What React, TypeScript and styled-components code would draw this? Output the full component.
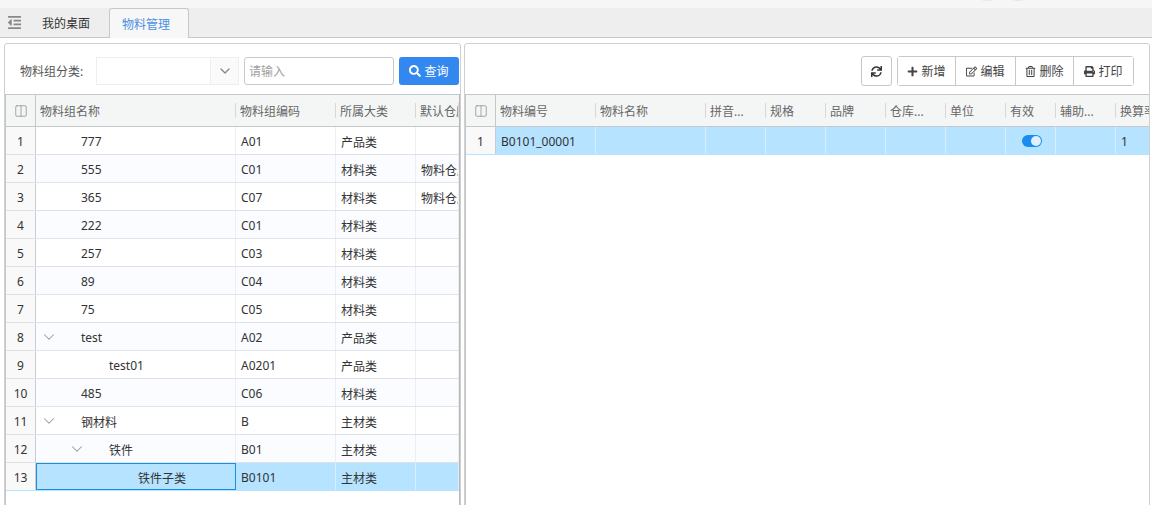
import React from 'react';
import styled, { createGlobalStyle } from 'styled-components';
import { FaSearch, FaPlus, FaRegEdit, FaRegTrashAlt, FaPrint, FaSync, FaOutdent } from 'react-icons/fa';
import { ChevronDown, Columns2 } from 'lucide-react';

const GlobalStyle = createGlobalStyle`
  html, body {
    margin: 0;
    height: 100%;
    overflow: hidden;
    background: #fff;
  }
  body {
    font-family: "Noto Sans", "Noto Sans CJK SC", sans-serif;
    font-size: 12px;
    color: #333;
  }
  * { box-sizing: border-box; }
`;

const Page = styled.div`
  width: 1152px;
  height: 505px;
  display: flex;
  flex-direction: column;
  overflow: hidden;
`;

const TopStrip = styled.div`
  height: 8px;
  flex: none;
  background: #f6f6f6;
  display: flex;
  align-items: flex-start;
  gap: 19px;
  padding-left: 981px;
`;

const TopGlow = styled.span`
  width: 12px;
  height: 1px;
  background: #dfe7f1;
  border-radius: 50%;
`;

const TabBar = styled.div`
  height: 30px;
  flex: none;
  background: #eeeeee;
  border-bottom: 1px solid #c8c8c8;
  display: flex;
  align-items: stretch;
`;

const MenuToggle = styled.div`
  width: 29px;
  display: flex;
  align-items: center;
  justify-content: center;
  color: #888;
  font-size: 15px;
`;

const Tab = styled.div<{ $active?: boolean }>`
  width: 80px;
  height: ${p => (p.$active ? '30px' : '29px')};
  display: flex;
  align-items: center;
  padding-left: ${p => (p.$active ? '12px' : '13px')};
  color: ${p => (p.$active ? '#4a90e2' : '#333')};
  background: ${p => (p.$active ? '#f7f7f7' : 'transparent')};
  border: ${p => (p.$active ? '1px solid #c8c8c8' : 'none')};
  border-bottom: none;
  border-radius: 3px 3px 0 0;
`;

const Panels = styled.div`
  flex: none;
  height: 480px;
  display: flex;
  gap: 3px;
  padding: 5px 2px 0 4px;
`;

const Panel = styled.div<{ $width: number }>`
  width: ${p => p.$width}px;
  border: 1px solid #cfcfcf;
  border-radius: 3px 3px 0 0;
  display: flex;
  flex-direction: column;
  overflow: hidden;
  background: #fff;
`;

const Toolbar = styled.div<{ $end?: boolean }>`
  height: 50px;
  flex: none;
  display: flex;
  align-items: center;
  justify-content: ${p => (p.$end ? 'flex-end' : 'flex-start')};
  padding: ${p => (p.$end ? '4px 15px 0 0' : '4px 0 0 15px')};
`;

const FieldLabel = styled.label`
  width: 76px;
  color: #555;
`;

const SelectBox = styled.div`
  width: 143px;
  height: 28px;
  border: 1px solid #eeeeee;
  display: flex;
  justify-content: flex-end;
  background: #fff;
`;

const SelectArrow = styled.span`
  width: 28px;
  display: flex;
  align-items: center;
  justify-content: center;
  background: #fafafa;
  border-left: 1px solid #eeeeee;
  color: #888;
`;

const SearchInput = styled.input`
  width: 150px;
  height: 28px;
  margin-left: 5px;
  padding: 0 4px;
  border: 1px solid #c8c8c8;
  border-radius: 3px;
  font: inherit;
  outline: none;
  &::placeholder { color: #a0a0a0; }
`;

const SearchButton = styled.button`
  width: 60px;
  height: 28px;
  margin-left: 5px;
  border: none;
  border-radius: 3px;
  background: #3388f0;
  color: #fff;
  font: inherit;
  display: flex;
  align-items: center;
  justify-content: center;
  gap: 3px;
  svg { font-size: 12px; }
`;

const RefreshButton = styled.button`
  width: 31px;
  height: 30px;
  margin-right: 5px;
  padding: 0;
  border: 1px solid #c8c8c8;
  border-radius: 3px;
  background: #fff;
  color: #333;
  display: flex;
  align-items: center;
  justify-content: center;
  svg { font-size: 11px; }
`;

const ButtonGroup = styled.div`
  height: 30px;
  display: flex;
  border: 1px solid #c8c8c8;
  border-radius: 3px;
`;

const GroupButton = styled.button<{ $width: number }>`
  width: ${p => p.$width}px;
  padding: 0;
  border: none;
  border-left: 1px solid #c8c8c8;
  background: #fff;
  color: #444;
  font: inherit;
  display: flex;
  align-items: center;
  justify-content: center;
  gap: 3px;
  svg { font-size: 11px; }
  &:first-child { border-left: none; }
`;

const Grid = styled.div<{ $divider?: boolean }>`
  flex: 1;
  min-height: 0;
  overflow: hidden;
  border-top: 1px solid #c4c8cc;
  border-left: 1px solid #c4c8cc;
  border-right: ${p => (p.$divider ? '1px solid #b8b8b8' : 'none')};
`;

const HeaderRow = styled.div`
  height: 32px;
  display: flex;
  background: #f4f6f6;
  border-bottom: 1px solid #c4c8cc;
`;

const HeaderIndex = styled.div`
  width: 30px;
  flex: none;
  display: flex;
  align-items: center;
  justify-content: center;
  color: #999;
  border-right: 1px solid #c4c8cc;
`;

const HeaderCell = styled.div<{ $width: number }>`
  width: ${p => p.$width}px;
  flex: none;
  display: flex;
  align-items: center;
  padding-left: 4px;
  color: #666;
  white-space: nowrap;
  overflow: hidden;
  position: relative;
  &::after {
    content: '';
    position: absolute;
    right: 0;
    top: 8px;
    bottom: 8px;
    width: 1px;
    background: #d8d8d8;
  }
`;

const Row = styled.div<{ $stripe?: boolean; $selected?: boolean }>`
  height: 28px;
  display: flex;
  background: ${p => (p.$selected ? '#b6e3ff' : p.$stripe ? '#fafcff' : '#fff')};
  border-bottom: 1px solid ${p => (p.$selected ? '#b6e3ff' : '#dfe2e6')};
`;

const IndexCell = styled.div`
  width: 30px;
  flex: none;
  display: flex;
  align-items: center;
  justify-content: center;
  padding-top: 2px;
  background: #f9f9f9;
  color: #333;
  border-right: 1px solid #c9cdd1;
`;

const Cell = styled.div<{ $width: number; $selected?: boolean }>`
  width: ${p => p.$width}px;
  flex: none;
  display: flex;
  align-items: center;
  padding: 2px 0 0 5px;
  white-space: nowrap;
  overflow: hidden;
  border-right: 1px solid ${p => (p.$selected ? '#d6f0ff' : '#eceef0')};
`;

const TreeCell = styled.div<{ $width: number; $level: number; $focused?: boolean }>`
  width: ${p => p.$width}px;
  flex: none;
  height: ${p => (p.$focused ? '27px' : 'auto')};
  display: flex;
  align-items: center;
  padding: 2px 0 0 ${p => 45 + p.$level * 28}px;
  white-space: nowrap;
  position: relative;
  border-right: 1px solid #eceef0;
  ${p => p.$focused && 'border: 1px solid #1a8ee0;'}
`;

const TreeToggle = styled.span<{ $level: number }>`
  position: absolute;
  left: ${p => 4 + p.$level * 28}px;
  top: 50%;
  transform: translateY(-50%);
  display: flex;
  color: #999;
`;

const Toggle = styled.span`
  width: 20px;
  height: 12px;
  margin-left: 11px;
  margin-top: -2px;
  border-radius: 6px;
  background: #1a8cf0;
  position: relative;
  &::after {
    content: '';
    position: absolute;
    right: 1px;
    top: 1px;
    width: 10px;
    height: 10px;
    border-radius: 50%;
    background: #dff1ff;
  }
`;

interface TreeRow {
  name: string;
  code: string;
  category: string;
  warehouse?: string;
  level: number;
  expandable?: boolean;
}

const treeRows: TreeRow[] = [
  { name: '777', code: 'A01', category: '产品类', level: 0 },
  { name: '555', code: 'C01', category: '材料类', warehouse: '物料仓库', level: 0 },
  { name: '365', code: 'C07', category: '材料类', warehouse: '物料仓库', level: 0 },
  { name: '222', code: 'C01', category: '材料类', level: 0 },
  { name: '257', code: 'C03', category: '材料类', level: 0 },
  { name: '89', code: 'C04', category: '材料类', level: 0 },
  { name: '75', code: 'C05', category: '材料类', level: 0 },
  { name: 'test', code: 'A02', category: '产品类', level: 0, expandable: true },
  { name: 'test01', code: 'A0201', category: '产品类', level: 1 },
  { name: '485', code: 'C06', category: '材料类', level: 0 },
  { name: '钢材料', code: 'B', category: '主材类', level: 0, expandable: true },
  { name: '铁件', code: 'B01', category: '主材类', level: 1, expandable: true },
  { name: '铁件子类', code: 'B0101', category: '主材类', level: 2 },
];

const materialColumns = [
  { title: '物料编号', width: 100 },
  { title: '物料名称', width: 110 },
  { title: '拼音...', width: 60 },
  { title: '规格', width: 60 },
  { title: '品牌', width: 60 },
  { title: '仓库...', width: 60 },
  { title: '单位', width: 60 },
  { title: '有效', width: 50 },
  { title: '辅助...', width: 60 },
  { title: '换算率', width: 60 },
];

const materialValues: Record<string, string> = { 物料编号: 'B0101_00001', 换算率: '1' };

export default function App() {
  return (
    <Page>
      <GlobalStyle />
      <TopStrip>
        <TopGlow />
        <TopGlow />
      </TopStrip>
      <TabBar>
        <MenuToggle><FaOutdent /></MenuToggle>
        <Tab>我的桌面</Tab>
        <Tab $active>物料管理</Tab>
      </TabBar>
      <Panels>
        <Panel $width={457}>
          <Toolbar>
            <FieldLabel>物料组分类:</FieldLabel>
            <SelectBox>
              <SelectArrow><ChevronDown size={16} /></SelectArrow>
            </SelectBox>
            <SearchInput placeholder="请输入" />
            <SearchButton><FaSearch />查询</SearchButton>
          </Toolbar>
          <Grid $divider>
            <HeaderRow>
              <HeaderIndex><Columns2 size={14} strokeWidth={1.5} /></HeaderIndex>
              <HeaderCell $width={200}>物料组名称</HeaderCell>
              <HeaderCell $width={100}>物料组编码</HeaderCell>
              <HeaderCell $width={80}>所属大类</HeaderCell>
              <HeaderCell $width={43}>默认仓库</HeaderCell>
            </HeaderRow>
            {treeRows.map((row, i) => {
              const selected = i === treeRows.length - 1;
              return (
                <Row key={i} $stripe={i % 2 === 1} $selected={selected}>
                  <IndexCell>{i + 1}</IndexCell>
                  <TreeCell $width={200} $level={row.level} $focused={selected}>
                    {row.expandable && (
                      <TreeToggle $level={row.level}><ChevronDown size={18} strokeWidth={1.4} /></TreeToggle>
                    )}
                    {row.name}
                  </TreeCell>
                  <Cell $width={100} $selected={selected}>{row.code}</Cell>
                  <Cell $width={80} $selected={selected}>{row.category}</Cell>
                  <Cell $width={43} $selected={selected}>{row.warehouse}</Cell>
                </Row>
              );
            })}
          </Grid>
        </Panel>
        <Panel $width={686}>
          <Toolbar $end>
            <RefreshButton><FaSync /></RefreshButton>
            <ButtonGroup>
              <GroupButton $width={57}><FaPlus />新增</GroupButton>
              <GroupButton $width={60}><FaRegEdit />编辑</GroupButton>
              <GroupButton $width={58}><FaRegTrashAlt />删除</GroupButton>
              <GroupButton $width={60}><FaPrint />打印</GroupButton>
            </ButtonGroup>
          </Toolbar>
          <Grid>
            <HeaderRow>
              <HeaderIndex><Columns2 size={14} strokeWidth={1.5} /></HeaderIndex>
              {materialColumns.map(col => (
                <HeaderCell key={col.title} $width={col.width}>{col.title}</HeaderCell>
              ))}
            </HeaderRow>
            <Row $selected>
              <IndexCell>1</IndexCell>
              {materialColumns.map(col => (
                <Cell key={col.title} $width={col.width} $selected>
                  {col.title === '有效' ? <Toggle /> : materialValues[col.title]}
                </Cell>
              ))}
            </Row>
          </Grid>
        </Panel>
      </Panels>
    </Page>
  );
}
